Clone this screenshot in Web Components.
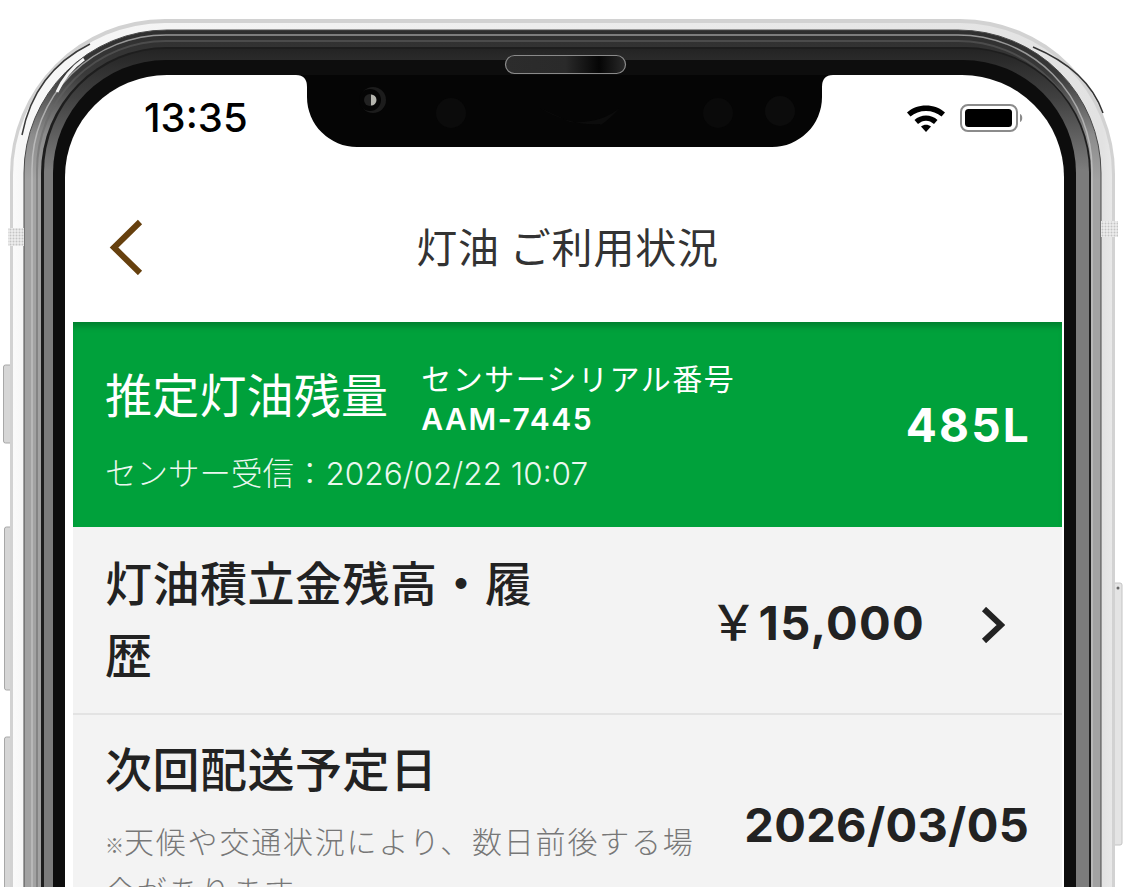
<!DOCTYPE html>
<html lang="ja">
<head>
<meta charset="utf-8">
<title>灯油 ご利用状況</title>
<style>
  html, body { margin: 0; background: #fff; }
  body { font-family: Inter, "Noto Sans CJK JP", sans-serif; }
  .mark { font-size: 19px; letter-spacing: 0; }
  .yen { font-family: "Noto Sans CJK JP", sans-serif; font-size: 48px; font-weight: 500; letter-spacing: 0; margin-left: -2px; margin-right: 1px; }
</style>
</head>
<body>
<phone-frame>
  <status-bar time="13:35"></status-bar>
  <nav-header>灯油 ご利用状況</nav-header>
  <level-panel serial="AAM-7445" received="センサー受信:2026/02/22 10:07" amount="485L"></level-panel>
  <info-row link>
    <span slot="title">灯油積立金残高・履歴</span>
    <span slot="value"><span class="yen">￥</span>15,000</span>
  </info-row>
  <info-row divider>
    <span slot="title">次回配送予定日</span>
    <span slot="note"><span class="mark">※</span>天候や交通状況により、数日前後する場合があります。</span>
    <span slot="value">2026/03/05</span>
  </info-row>
</phone-frame>

<script>
class PhoneFrame extends HTMLElement {
  constructor() {
    super();
    this.attachShadow({ mode: "open" });
    this.shadowRoot.innerHTML = `
      <style>
        :host {
          display: block;
          position: relative;
          width: 1125px;
          height: 887px;
          overflow: hidden;
          box-sizing: border-box;
          padding: 75px 61px 0 65px;
        }
        svg { position: absolute; left: 0; top: 0; }
        .screen {
          position: relative;
          height: 812px;
          background: #fff;
          border-radius: 102px 102px 0 0;
          overflow: hidden;
        }
        .notch { pointer-events: none; }
      </style>
      <svg width="1125" height="887" viewBox="0 0 1125 887">
        <defs>
          <linearGradient id="rim" gradientUnits="userSpaceOnUse" x1="0" y1="0" x2="1125" y2="0">
            <stop offset="0" stop-color="#fff"/>
            <stop offset=".018" stop-color="#f7f7f7"/>
            <stop offset=".98" stop-color="#e2e2e2"/>
            <stop offset="1" stop-color="#f0f0f0"/>
          </linearGradient>
          <linearGradient id="band" gradientUnits="userSpaceOnUse" x1="0" y1="30" x2="0" y2="180">
            <stop offset="0" stop-color="#2e2e2e"/>
            <stop offset=".3" stop-color="#3a3a3a"/>
            <stop offset=".7" stop-color="#8c8c8c"/>
            <stop offset="1" stop-color="#a2a2a2"/>
          </linearGradient>
          <linearGradient id="band2" gradientUnits="userSpaceOnUse" x1="0" y1="49" x2="0" y2="170">
            <stop offset="0" stop-color="#242424"/>
            <stop offset=".4" stop-color="#404040"/>
            <stop offset="1" stop-color="#7c7c7c"/>
          </linearGradient>
          <linearGradient id="pill" x1="0" y1="0" x2="1" y2="0">
            <stop offset="0" stop-color="#2c2c2c"/>
            <stop offset=".5" stop-color="#2a2a2a"/>
            <stop offset=".78" stop-color="#050505"/>
            <stop offset="1" stop-color="#2a2a2a"/>
          </linearGradient>
          <pattern id="dots" width="3" height="3" patternUnits="userSpaceOnUse">
            <rect width="3" height="3" fill="#eee"/>
            <circle cx="1.500" cy="1.500" r="1" fill="#c4c4c4"/>
          </pattern>
        </defs>
        <!-- side buttons -->
        <g fill="#d6d6d6" stroke="#a8a8a8" stroke-width="1">
          <rect x="3.500" y="365" width="10" height="78" rx="2"/>
          <rect x="4.500" y="527" width="9" height="163" rx="2"/>
          <rect x="4.500" y="737" width="9" height="160" rx="2"/>
          <rect x="1111" y="583" width="11" height="262" rx="2" fill="#e4e4e4" stroke="#c4c4c4"/>
        </g>
        <circle cx="1118" cy="588" r="1.500" fill="#666"/>
        <!-- body, outer edge to inner bezel -->
        <rect x="10" y="19" width="1105" height="1400" rx="155" fill="#d2d2d2"/>
        <rect x="13" y="23" width="1099" height="1400" rx="152" fill="url(#rim)"/>
        <rect x="24" y="30" width="1077" height="1400" rx="143" fill="url(#band)" stroke="#4a4a4a" stroke-width="1"/>
        <rect x="32" y="35" width="1060" height="1400" rx="134" fill="none" stroke="#cfcfcf" stroke-width="1.500" opacity=".65"/>
        <rect x="37" y="41" width="1050" height="1400" rx="129" fill="none" stroke="#666" stroke-width="2" opacity=".5"/>
        <rect x="41" y="47" width="1050" height="1400" rx="126" fill="#1e1e1e"/>
        <rect x="44" y="49" width="1045" height="1400" rx="123" fill="url(#band2)"/>
        <rect x="53" y="60" width="1023" height="1400" rx="113" fill="#0d0d0d"/>
        <!-- corner reflections -->
        <path d="M22 135Q34 72 90 44" fill="none" stroke="#3a3a3a" stroke-width="1.500"/>
        <path d="M57 92Q66 72 84 59" fill="none" stroke="#f4f4f4" stroke-width="3"/>
        <path d="M1033 47Q1088 70 1103 113" fill="none" stroke="#333" stroke-width="1.500"/>
        <!-- antenna bands -->
        <rect x="8" y="228" width="16" height="18" fill="url(#dots)"/>
        <rect x="1101" y="221" width="17" height="16" fill="url(#dots)"/>
      </svg>
      <div class="screen"><slot></slot></div>
      <svg class="notch" width="1125" height="887" viewBox="0 0 1125 887">
        <path d="M296 75Q307 75 307 87V97A50 50 0 0 0 357 147H772A50 50 0 0 0 822 97V87Q822 75 833 75Z" fill="#050505"/>
        <rect x="505.500" y="55.500" width="120" height="18" rx="9" fill="url(#pill)" stroke="#8a8a8a" stroke-width="1.200"/>
        <circle cx="451" cy="113" r="15" fill="#0b0b0b"/>
        <circle cx="718" cy="113" r="15" fill="#0a0a0a"/>
        <circle cx="780" cy="111" r="15" fill="#0c0c0c"/>
        <path d="M540 108Q570 126 600 124Q600 128 620 108Q600 124 570 122Z" fill="#0c0c0c"/>
        <circle cx="373" cy="100" r="13" fill="#1c1c1c"/>
        <circle cx="370" cy="100" r="11" fill="#050505"/>
        <circle cx="370" cy="100" r="6" fill="#222"/>
        <path d="M371 94.500A5.500 5.500 0 0 1 371 105.500Z" fill="#b5b5ae"/>
      </svg>`;
  }
}

class StatusBar extends HTMLElement {
  constructor() {
    super();
    this.attachShadow({ mode: "open" });
    this.shadowRoot.innerHTML = `
      <style>
        :host {
          display: flex;
          justify-content: space-between;
          align-items: center;
          box-sizing: border-box;
          height: 70px;
          padding: 16px 40px 0 79px;
          font-family: Inter, sans-serif;
          color: #000;
        }
        .time { font-size: 40px; font-weight: 500; line-height: 1; }
        .icons { display: flex; align-items: center; gap: 14px; }
        svg { display: block; }
      </style>
      <span class="time"></span>
      <span class="icons">
        <svg width="40" height="30" viewBox="0 0 40 30">
          <path d="M1 9.500C10.500 0 29.500 0 39 9.500L35.500 13.500C27.500 6 12.500 6 4.500 13.500Z" fill="#000"/>
          <path d="M8.500 17C14.500 11 25.500 11 31.500 17L28 21C23 16.500 17 16.500 12 21Z" fill="#000"/>
          <path d="M15 23.500C18 21.200 22 21.200 25 23.500L20 29Z" fill="#000"/>
        </svg>
        <svg width="64" height="30" viewBox="0 0 64 30">
          <rect x="1" y="2" width="56" height="26" rx="7" fill="none" stroke="#8b8b8b" stroke-width="2"/>
          <rect x="5" y="6" width="47" height="18" rx="3.500" fill="#000"/>
          <path d="M60 11C63 12 63 18 60 19Z" fill="#8b8b8b"/>
        </svg>
      </span>`;
    this.shadowRoot.querySelector(".time").textContent = this.getAttribute("time");
  }
}

class NavHeader extends HTMLElement {
  constructor() {
    super();
    this.attachShadow({ mode: "open" });
    this.shadowRoot.innerHTML = `
      <style>
        :host {
          display: flex;
          align-items: center;
          justify-content: center;
          position: relative;
          box-sizing: border-box;
          height: 177px;
          margin: 0 2px 0 8px;
          padding-top: 22px;
          font-family: "Noto Sans CJK JP", sans-serif;
          font-size: 41px;
          letter-spacing: .8px;
          color: #333;
        }
        svg { position: absolute; left: 35px; top: 74px; }
      </style>
      <svg width="36" height="56" viewBox="0 0 36 56">
        <path d="M32 3L6 28.500L32 54" fill="none" stroke="#66400e" stroke-width="6"/>
      </svg>
      <slot></slot>`;
  }
}

class LevelPanel extends HTMLElement {
  constructor() {
    super();
    this.attachShadow({ mode: "open" });
    this.shadowRoot.innerHTML = `
      <style>
        :host {
          display: flex;
          align-items: center;
          justify-content: space-between;
          box-sizing: border-box;
          height: 205px;
          margin: 0 2px 0 8px;
          padding: 4px 33px 0 32px;
          background: #00a13b;
          box-shadow: inset 0 7px 6px -3px rgba(0, 0, 0, .22);
          color: #fff;
          font-family: Inter, "Noto Sans CJK JP", sans-serif;
        }
        .head { display: flex; align-items: center; gap: 33px; }
        h2 {
          margin: 0;
          padding-bottom: 14px;
          font: 400 47px/1 "Noto Sans CJK JP", sans-serif;
          letter-spacing: .2px;
        }
        .serial { font-size: 30px; line-height: 40px; letter-spacing: 1.500px; }
        .serial b { display: block; font-weight: 600; letter-spacing: 1.600px; }
        .received { margin-top: 15px; font-size: 31.500px; line-height: 40px; font-weight: 300; opacity: .92; white-space: nowrap; }
        .amount { font-size: 46px; font-weight: 700; letter-spacing: 2.200px; margin-right: -2px; padding-bottom: 4px; }
      </style>
      <div>
        <div class="head">
          <h2>推定灯油残量</h2>
          <div class="serial">センサーシリアル番号<b></b></div>
        </div>
        <div class="received"></div>
      </div>
      <div class="amount"></div>`;
    this.shadowRoot.querySelector("b").textContent = this.getAttribute("serial");
    this.shadowRoot.querySelector(".received").textContent = this.getAttribute("received").replace(":", "\uFF1A");
    this.shadowRoot.querySelector(".amount").textContent = this.getAttribute("amount");
  }
}

class InfoRow extends HTMLElement {
  constructor() {
    super();
    this.attachShadow({ mode: "open" });
    this.shadowRoot.innerHTML = `
      <style>
        :host {
          display: flex;
          align-items: center;
          justify-content: space-between;
          box-sizing: border-box;
          margin: 0 2px 0 8px;
          padding: 18px 33px 24px 32px;
          background: #f3f3f3;
          color: #222;
          font-family: Inter, "Noto Sans CJK JP", sans-serif;
        }
        :host([divider]) {
          border-top: 2px solid #e3e3e3;
          padding: 16px 33px 25px 32px;
        }
        .text { width: 440px; }
        :host([divider]) .text { width: 600px; }
        .title {
          display: block;
          font: 500 47px/72px "Noto Sans CJK JP", sans-serif;
          letter-spacing: .5px;
        }
        .note {
          display: block;
          margin-top: 15px;
          font: 300 30px/45px "Noto Sans CJK JP", sans-serif;
          letter-spacing: 1.800px;
          color: #777;
        }
        :host([link]) .note { display: none; }
        .value {
          display: flex;
          align-items: center;
          font-size: 47px;
          font-weight: 700;
          letter-spacing: 1.300px;
        }
        :host([link]) .value { padding-top: 4px; }
        :host([divider]) .value { letter-spacing: .3px; padding-top: 6px; }
        svg { display: none; margin-left: 56px; margin-right: 24px; position: relative; top: 6px; }
        :host([link]) svg { display: block; }
      </style>
      <div class="text">
        <div class="title"><slot name="title"></slot></div>
        <div class="note"><slot name="note"></slot></div>
      </div>
      <div class="value">
        <slot name="value"></slot>
        <svg width="24" height="36" viewBox="0 0 24 36">
          <path d="M3 2L20 18L3 34" fill="none" stroke="#222" stroke-width="6"/>
        </svg>
      </div>`;
  }
}

customElements.define("phone-frame", PhoneFrame);
customElements.define("status-bar", StatusBar);
customElements.define("nav-header", NavHeader);
customElements.define("level-panel", LevelPanel);
customElements.define("info-row", InfoRow);
</script>
</body>
</html>
